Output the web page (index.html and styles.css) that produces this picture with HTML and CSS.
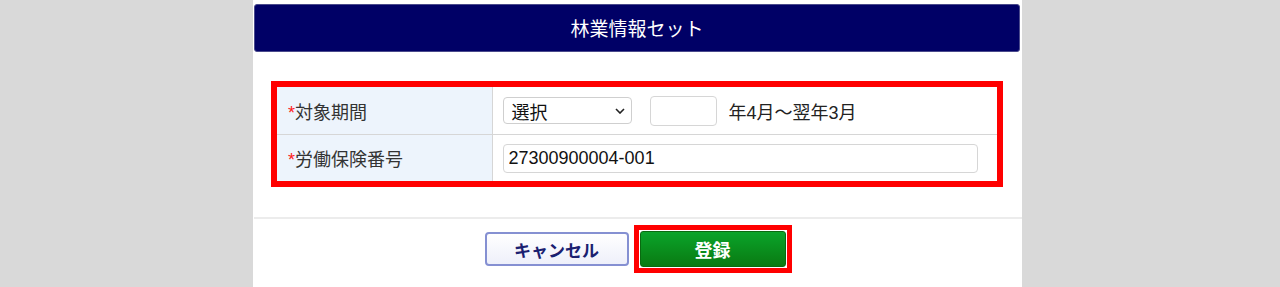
FILE: index.html
```html
<!DOCTYPE html>
<html lang="ja">
<head>
    <meta charset="UTF-8">
    <title>林業情報セット</title>
    <link rel="stylesheet" href="styles.css">
</head>
<body>
    <div class="panel">
        <h1 class="head">林業情報セット</h1>
        <div class="mark">
            <table class="form">
                <tr class="row1">
                    <th><span class="req">*</span>対象期間</th>
                    <td>
                        <div class="line">
                            <div class="select">
                                <span>選択</span>
                                <svg width="10" height="6" viewBox="0 0 10 6"><path d="M1 1l4 4 4-4" fill="none" stroke="#222" stroke-width="1.6"/></svg>
                            </div>
                            <input class="year" type="text" value="">
                            <span class="note">年4月～翌年3月</span>
                        </div>
                    </td>
                </tr>
                <tr class="row2">
                    <th><span class="req">*</span>労働保険番号</th>
                    <td><input class="num" type="text" value="27300900004-001"></td>
                </tr>
            </table>
        </div>
        <div class="foot">
            <button class="btn cancel">キャンセル</button>
            <span class="mark-btn"><button class="btn ok">登録</button></span>
        </div>
    </div>
</body>
</html>
```

FILE: styles.css
```css
body {
    margin: 0;
    padding: 0 258px 0 253px;
    background: #d9d9d9;
    font-family: "Liberation Sans", "Noto Sans CJK JP", sans-serif;
    color: #333;
}
.panel {
    background: #fff;
    height: 287px;
    overflow: hidden;
}
.head {
    margin: 4px 2px 0 1px;
    height: 48px;
    line-height: 46px;
    background: #000066;
    border: 1px solid #4a4a8c;
    box-sizing: border-box;
    border-radius: 3px;
    color: #fff;
    font-size: 19px;
    font-weight: normal;
    text-align: center;
    font-family: "Noto Sans CJK JP", sans-serif;
}
.mark {
    margin: 29px 19px 30px 18px;
    border: 6px solid #ff0000;
}
.form {
    width: 100%;
    border-collapse: collapse;
}
.form th {
    width: 215px;
    box-sizing: border-box;
    background: #edf4fc;
    border-right: 1px solid #d6d6d6;
    text-align: left;
    font-weight: normal;
    font-size: 18px;
    padding: 0 0 0 11px;
    color: #333;
}
.req {
    color: #ff2020;
}
.row1 th, .row1 td {
    height: 47px;
    border-bottom: 1px solid #d6d6d6;
}
.row2 th, .row2 td {
    height: 46px;
}
.form td {
    padding: 0 0 0 10px;
}
.line {
    display: flex;
    align-items: center;
}
.select {
    width: 129px;
    height: 27px;
    box-sizing: border-box;
    border: 1px solid #cfcfcf;
    border-radius: 4px;
    display: flex;
    align-items: center;
    justify-content: space-between;
    padding: 0 6px 0 8px;
    font-size: 18px;
    color: #111;
}
.year {
    width: 67px;
    height: 30px;
    margin-left: 18px;
    box-sizing: border-box;
    border: 1px solid #d6d6d6;
    border-radius: 4px;
}
.note {
    margin-left: 12px;
    font-size: 18px;
    color: #222;
}
.num {
    display: block;
    width: 475px;
    height: 29px;
    box-sizing: border-box;
    border: 1px solid #d6d6d6;
    border-radius: 4px;
    padding: 0 5px;
    font-family: "Liberation Sans", sans-serif;
    font-size: 18px;
    color: #111;
}
.foot {
    margin-left: 1px;
    border-top: 2px solid #ececec;
    padding-top: 6px;
    display: flex;
    justify-content: center;
    align-items: center;
    gap: 5px;
}
.btn {
    font-family: "Noto Sans CJK JP", sans-serif;
    font-weight: bold;
    font-size: 17px;
    cursor: pointer;
}
.cancel {
    width: 144px;
    height: 34px;
    background: linear-gradient(#ffffff, #eef0fa);
    border: 2px solid #8590d2;
    border-radius: 4px;
    color: #1a2070;
}
.mark-btn {
    display: block;
    border: 5px solid #ff0000;
    padding: 1px;
    background: #fff;
}
.ok {
    display: block;
    width: 146px;
    height: 36px;
    background: linear-gradient(#0aa42a, #0a7a12);
    border: 1px solid #0a6a10;
    border-radius: 3px;
    color: #fff;
    font-size: 18px;
}
```
